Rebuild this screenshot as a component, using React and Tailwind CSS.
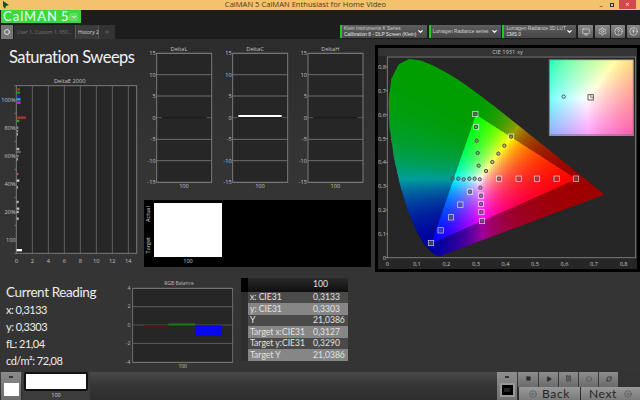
import React from "react";
import { Settings, CircleHelp, ArrowUpCircle, Monitor, ChevronDown, Play, Pause, Square, RefreshCw, CircleArrowLeft, CircleArrowRight, Circle, Plus } from "lucide-react";

const locus = [[.1741,.005],[.1733,.0048],[.1714,.0051],[.1689,.0069],[.1644,.0109],[.1566,.0177],[.144,.0297],[.1241,.0578],[.1096,.0868],[.0913,.1327],[.0687,.2007],[.0454,.295],[.0235,.4127],[.0082,.5384],[.0039,.6548],[.0139,.7502],[.0389,.812],[.0743,.8338],[.1142,.8262],[.1547,.8059],[.1929,.7816],[.2296,.7543],[.2658,.7243],[.3016,.6923],[.3373,.6589],[.3731,.6245],[.4087,.5896],[.4441,.5547],[.4788,.5202],[.5125,.4866],[.5448,.4544],[.5752,.4242],[.6029,.3965],[.627,.3725],[.6658,.334],[.6915,.3083],[.7079,.292],[.719,.2809],[.726,.274],[.7347,.2653]];
const PX = (x) => 37 + x * 886;
const PY = (y) => 638 - y * 715;
const locusPts = locus.map(([x, y]) => `${PX(x).toFixed(1)},${PY(y).toFixed(1)}`).join(" ");
const triPts = [[.64,.33],[.3,.6],[.15,.06]].map(([x, y]) => `${PX(x).toFixed(1)},${PY(y).toFixed(1)}`).join(" ");

function xyColor(x, y, dim, exp) {
  const Y = 1, X = (x / y) * Y, Z = ((1 - x - y) / y) * Y;
  let r = 3.2406 * X - 1.5372 * Y - 0.4986 * Z;
  let g = -0.9689 * X + 1.8758 * Y + 0.0415 * Z;
  let b = 0.0557 * X - 0.204 * Y + 1.057 * Z;
  r = Math.max(r, 0); g = Math.max(g, 0); b = Math.max(b, 0);
  const m = Math.max(r, g, b) || 1;
  const f = (v) => Math.round(255 * dim * Math.pow(v / m, exp));
  return `rgb(${f(r)},${f(g)},${f(b)})`;
}

const STEP = 6;
const cellsOuter = [];
const cellsInner = [];
for (let py = 42; py < 645; py += STEP) {
  for (let px = 37; px < 700; px += STEP) {
    const x = (px + 3 - 37) / 886, y = (638 - py - 3) / 715;
    if (y <= 0.002) continue;
    cellsOuter.push({ px, py, c: xyColor(x, y, 0.62, 1.5) });
    if (x > 0.13 && x < 0.66 && y > 0.04 && y < 0.62) cellsInner.push({ px, py, c: xyColor(x, y, 1, 1.15) });
  }
}
const inset = [];
for (let i = 0; i < 42; i++) {
  for (let j = 0; j < 38; j++) {
    const x = 0.25 + (i / 41) * 0.14, y = 0.41 - (j / 37) * 0.16;
    inset.push({ i, j, c: xyColor(x, y, 1, 0.55) });
  }
}

const dots = [[301,207],[303,246],[305,287],[308,324],[311,362],[314,403],[408,275],[388,302],[370,326],[352,351],[333,378],[233,401],[250,401],[266,403],[283,401],[299,401],[372,401],[431,401],[486,401],[537,401],[603,401],[168,594],[197,556],[228,517],[256,479],[285,440],[316,428],[318,452],[318,477],[319,501],[321,528]];
const squares = [[301,207],[315,403],[372,401],[431,401],[486,401],[545,401],[603,401],[168,594],[197,556],[228,517],[256,479],[285,440],[318,452],[318,477],[319,501],[321,528],[408,275],[303,246]];

const deltaBars = [[58,"#a33",10],[68,"#0a0",10],[78,"#22a",10],[88,"#0bd",12],[98,"#c2c",12],[143,"#a33",28],[153,"#2a2",8],[173,"#88a",5],[183,"#888",5],[193,"#aaa",4],[237,"#bbb",8],[246,"#667",12],[258,"#777",6],[268,"#aaa",4],[312,"#a55",5],[332,"#ccc",8],[352,"#aaa",4],[396,"#bbb",6],[416,"#bbb",8],[426,"#bbb",6],[446,"#bbb",6]];

function DeltaEChart() {
  const tickX = [49, 97, 145, 193, 241, 289, 337, 385];
  const labelsY = [[90,"100%"],[173,"80%"],[258,"60%"],[342,"40%"],[425,"20%"],[510,"100"]];
  const minor = [47,130,214,298,382,466,550];
  return (
    <svg className="block w-[140px] h-[200px]" viewBox="0 0 420 600">
      <text x="209" y="39" fontSize="17" fill="#c4c4c4" textAnchor="middle">DeltaE 2000</text>
      <rect x="49" y="47" width="361" height="503" fill="#262626" />
      {tickX.slice(1).map((x) => <line key={x} x1={x} x2={x} y1="47" y2="550" stroke="#6e6e6e" strokeWidth="2.5" />)}
      <rect x="49" y="47" width="361" height="503" fill="none" stroke="#7a7a7a" strokeWidth="3" />
      {minor.map((y) => <line key={y} x1="43" x2="49" y1={y} y2={y} stroke="#8a8a8a" strokeWidth="2" />)}
      {deltaBars.map(([y, c, w]) => <rect key={y} x="50" y={y - 3.5} width={w} height="7" fill={c} />)}
      <rect x="50" y="537" width="16" height="7" fill="#fff" />
      {labelsY.map(([y, t]) => <text key={t} x="47" y={y + 6} fontSize="17" fill="#c4c4c4" textAnchor="end">{t}</text>)}
      {tickX.map((x, i) => <text key={x} x={x} y="578" fontSize="17" fill="#c4c4c4" textAnchor="middle">{i * 2}</text>)}
    </svg>
  );
}

function DeltaPlot({ x0, title, bar }) {
  const ys = [[40,"15"],[104,"10"],[168,"5"],[233,"0"],[298,"-5"],[362,"-10"],[427,"-15"]];
  const w = 165;
  return (
    <g>
      <text x={x0 + 67} y="32" fontSize="17" fill="#c4c4c4" textAnchor="middle">{title}</text>
      <rect x={x0} y="40" width={w} height="387" fill="#262626" />
      {ys.map(([y, t]) => (
        <g key={t}>
          {t !== "0" && <line x1={x0} x2={x0 + w} y1={y} y2={y} stroke="#6e6e6e" strokeWidth="3" />}
          {t === "0" && <line x1={x0 - 2} x2={x0 + 16} y1={y} y2={y} stroke="#6e6e6e" strokeWidth="2" />}
          {t === "0" && <line x1={x0 + 16} x2={x0 + w - 16} y1={y} y2={y} stroke="#151515" strokeWidth="2" />}
          {t === "0" && <line x1={x0 + w - 16} x2={x0 + w} y1={y} y2={y} stroke="#6e6e6e" strokeWidth="2" />}
          <text x={x0 - 3} y={y + 6} fontSize="17" fill="#c4c4c4" textAnchor="end">{t}</text>
        </g>
      ))}
      <rect x={x0} y="40" width={w} height="387" fill="none" stroke="#7a7a7a" strokeWidth="3" />
      {bar && <rect x={x0 + 17} y="225" width="130" height="6" fill="#fff" />}
      <text x={x0 + 82} y="445" fontSize="17" fill="#c4c4c4" textAnchor="middle">100</text>
    </g>
  );
}

function DeltaCharts() {
  return (
    <svg className="block w-[235px] h-[155px]" viewBox="0 15 705 465">
      <DeltaPlot x0={50} title="DeltaL" />
      <DeltaPlot x0={278} title="DeltaC" bar />
      <DeltaPlot x0={504} title="DeltaH" />
    </svg>
  );
}

function CieChart() {
  return (
    <svg className="block w-[259px] h-[213px]" viewBox="9 33 777 639">
      <defs>
        <clipPath id="loc"><polygon points={locusPts} /></clipPath>
        <clipPath id="tri"><polygon points={triPts} /></clipPath>
      </defs>
      <rect x="9" y="33" width="777" height="639" fill="#262626" />
      <g clipPath="url(#loc)" shapeRendering="crispEdges">
        {cellsOuter.map((c) => <rect key={c.px + "_" + c.py} x={c.px} y={c.py} width={STEP + 0.5} height={STEP + 0.5} fill={c.c} />)}
      </g>
      <g clipPath="url(#tri)" shapeRendering="crispEdges">
        {cellsInner.map((c) => <rect key={c.px + "_" + c.py} x={c.px} y={c.py} width={STEP + 0.5} height={STEP + 0.5} fill={c.c} />)}
      </g>
      <rect x="37" y="36" width="745" height="602" fill="none" stroke="#7a7a7a" strokeWidth="3" />
      {[0,.1,.2,.3,.4,.5,.6,.7,.8].map((v, i) => (
        <g key={i}>
          <text x={PX(v)} y="664" fontSize="17" fill="#c4c4c4" textAnchor="middle">{i === 0 ? "0" : `0,${i}`}</text>
          <text x="33" y={PY(v) + 6} fontSize="17" fill="#c4c4c4" textAnchor="end">{i === 0 ? "0" : `0,${i}`}</text>
          <line x1="32" x2="38" y1={PY(v)} y2={PY(v)} stroke="#aaa" strokeWidth="2" />
        </g>
      ))}
      {dots.map(([x, y], i) => <circle key={i} cx={x} cy={y} r="5" fill="#777" fillOpacity="0.45" stroke="#4a4a4a" strokeWidth="3" />)}
      {squares.map(([x, y], i) => <rect key={i} x={x - 8} y={y - 8} width="16" height="16" fill="none" stroke="#eee" strokeOpacity="0.85" strokeWidth="2.2" />)}
      <g shapeRendering="crispEdges">
        {inset.map((c) => <rect key={c.i + "_" + c.j} x={523 + c.i * 6} y={44 + c.j * 6} width="6.5" height="6.5" fill={c.c} />)}
      </g>
      <rect x="523" y="44" width="252" height="226" fill="none" stroke="#777" strokeWidth="3" />
      <circle cx="566" cy="155" r="5" fill="none" stroke="#555" strokeWidth="3" />
      <rect x="639" y="149" width="16" height="16" fill="none" stroke="#444" strokeWidth="2.5" />
      <path d="M647 149v8h8" fill="none" stroke="#444" strokeWidth="2" />
    </svg>
  );
}

function RgbChart() {
  const ys = [[55,"4"],[110,"2"],[165,"0"],[220,"-2"],[277,"-4"]];
  return (
    <svg className="block w-[120px] h-[102px]" viewBox="360 0 360 306">
      <text x="537" y="46" fontSize="15" fill="#bdbdbd" textAnchor="middle">RGB Balance</text>
      <rect x="398" y="55" width="300" height="222" fill="#262626" />
      {ys.map(([y, t]) => (
        <g key={t}>
          <line x1="398" x2="698" y1={y} y2={y} stroke={t === "0" ? "#5a5a5a" : "#6e6e6e"} strokeWidth="2.5" />
          <text x="391" y={y + 5} fontSize="15" fill="#bdbdbd" textAnchor="end">{t}</text>
        </g>
      ))}
      <rect x="398" y="55" width="300" height="222" fill="none" stroke="#7a7a7a" strokeWidth="2.5" />
      <rect x="432" y="165" width="73" height="5" fill="#6a1010" />
      <rect x="505" y="160" width="80" height="5" fill="#0f7a0f" />
      <rect x="587" y="166" width="78" height="32" fill="#0808ee" />
      <text x="548" y="293" fontSize="15" fill="#c4c4c4" textAnchor="middle">100</text>
    </svg>
  );
}

const rows = [
  ["x: CIE31", "0,3133", "bg-[#4a4a4a]"],
  ["y: CIE31", "0,3303", "bg-[#868686]"],
  ["Y", "21,0386", "bg-[#4a4a4a]"],
  ["Target x:CIE31", "0,3127", "bg-[#868686]"],
  ["Target y:CIE31", "0,3290", "bg-[#4a4a4a]"],
  ["Target Y", "21,0386", "bg-[#868686]"],
];

function ReadingTable() {
  return (
    <div className="flex ml-[1px] mt-[8px] h-[83px] font-['Lato',sans-serif] text-[8.6px] leading-none text-[#e2e2e2]">
      <div className="w-[7px] flex flex-col bg-[#2e2e2e]">
        <div className="h-[13.5px] bg-black" />
      </div>
      <div className="w-[99.5px] flex flex-col">
        <div className="h-[13.5px] pl-[65px] flex items-center bg-gradient-to-b from-[#2a2a2a] to-[#0f0f0f]">100</div>
        {rows.map(([a, b, bg]) => (
          <div key={a} className={`flex-1 flex items-center pl-[2px] ${bg}`}>
            <span className="w-[63px] whitespace-nowrap">{a}</span>
            <span>{b}</span>
          </div>
        ))}
      </div>
    </div>
  );
}

function Selector({ w, a, b }) {
  return (
    <div className={`${w} h-[13px] flex items-center bg-gradient-to-b from-[#5e5e5e] to-[#474747] border-l-2 border-[#22c82a] pl-[2px] pr-[3px] font-['Liberation_Sans',sans-serif] text-[4.8px] leading-[6px] text-[#d0d0d0]`}>
      <div className="flex-1 min-w-0 whitespace-nowrap">
        <div>{a}</div>
        <div className="text-[#e6e6e6]">{b}</div>
      </div>
      <ChevronDown size={7} strokeWidth={4} className="text-white shrink-0" />
    </div>
  );
}

function SmallBtn({ w, children }) {
  return (
    <div className={`${w} h-[13px] flex items-center justify-center rounded-[1px] bg-gradient-to-b from-[#8a8a8a] to-[#5c5c5c] text-[#dddddd]`}>
      {children}
    </div>
  );
}

function TopBtn({ w, children }) {
  return (
    <div className={`${w} h-[15px] pb-[2px] flex items-center justify-center border-l border-[#3a3a3a] bg-gradient-to-b from-[#8e8e8e] to-[#6a6a6a] text-[#2c2c2c]`}>
      {children}
    </div>
  );
}

export default function App() {
  return (
    <div className="w-[640px] h-[400px] overflow-hidden flex flex-col bg-[#343434] font-['Open_Sans',sans-serif]">
      <div className="h-[10px] shrink-0 flex items-center bg-[#f2c26c] pl-[2px]">
        <svg width="8" height="8" viewBox="0 0 8 8" className="shrink-0"><path d="M1 0l6 4-3 1-1 3-2-3z" fill="#0d5a1c" /></svg>
        <div className="flex-1 text-center text-[7.6px] leading-none text-[#4a3a20] whitespace-nowrap pl-[4px]">CalMAN 5 CalMAN Enthusiast for Home Video</div>
        <div className="flex items-center h-full text-[#333]">
          <span className="w-[8px] text-[7px] leading-none text-center">–</span>
          <span className="w-[4px] h-[4px] border border-[#333] mx-[5px]" />
          <span className="w-[17px] h-[9px] mr-[4px] mb-[1px] bg-[#cf4a4a] text-white text-[7px] leading-[9px] text-center">×</span>
        </div>
      </div>

      <div className="h-[29px] shrink-0 flex justify-between bg-[#1d1d1d]">
        <div className="flex flex-col justify-between">
          <div className="ml-[1px] w-[80px] h-[13px] flex items-center pl-[2px] pr-[3px] bg-[#3ed83e] text-[13px] leading-none tracking-[1px] font-['Lato',sans-serif] text-[#e4ffff]">
            <span>CalMAN</span>
            <span className="ml-[3px] text-white">5</span>
            <span className="ml-auto w-[10px] h-[8px] rounded-[2px] bg-[#62dc62] flex items-center justify-center"><ChevronDown size={6} strokeWidth={4} className="text-white" /></span>
          </div>
          <div className="flex h-[14px] items-stretch text-[5px] leading-none whitespace-nowrap">
            <div className="w-[12px] ml-[1px] flex items-center justify-center bg-[#777]"><Circle size={6} strokeWidth={3} className="text-white" /></div>
            <div className="w-[61px] ml-[1px] flex items-center pl-[3px] bg-[#2f2f2f] text-[#777]">User 1, Custom 1, 650...</div>
            <div className="w-[24px] flex items-center pl-[2px] bg-[#3c3c3c] text-[#d8d8d8] border-x border-[#555]">History 2</div>
            <div className="w-[16px] flex items-center justify-center bg-[#333] text-[#777]"><Plus size={6} /></div>
          </div>
        </div>
        <div className="self-end flex items-center h-[13px] mb-[1px] gap-[1.67px]">
          <Selector w="w-[87px]" a="Klein Instruments K Series" b="Calibration 8 - DLP Screen (Klein)" />
          <Selector w="w-[72px]" a="Lumagen Radiance series" b="" />
          <Selector w="w-[74px]" a="Lumagen Radiance 3D LUT" b="CMS 0" />
          <SmallBtn w="w-[15px]"><Monitor size={8} /></SmallBtn>
          <SmallBtn w="w-[15px]"><Settings size={9} /></SmallBtn>
          <SmallBtn w="w-[14px]"><CircleHelp size={9} /></SmallBtn>
          <SmallBtn w="w-[13px]"><ArrowUpCircle size={9} /></SmallBtn>
        </div>
      </div>

      <div className="h-[231px] shrink-0 flex bg-gradient-to-b from-[#2c2c2c] via-[#343434] to-[#343434]">
        <div className="w-[140px] shrink-0 flex flex-col">
          <div className="h-[31px] pl-[9px] pt-[6px] font-['Lato',sans-serif] text-[16.5px] tracking-[-0.5px] leading-[24px] text-[#f2f2f2] whitespace-nowrap">Saturation Sweeps</div>
          <DeltaEChart />
        </div>
        <div className="w-[235px] shrink-0 flex flex-col pt-[6px]">
          <DeltaCharts />
          <div className="ml-[4px] w-[227px] h-[67px] flex bg-black text-[5.5px] leading-none text-[#d8d8d8]">
            <div className="w-[10px] pt-[6px] pb-[14px] flex flex-col justify-between items-center">
              <span className="[writing-mode:vertical-rl] rotate-180">Actual</span>
              <span className="[writing-mode:vertical-rl] rotate-180">Target</span>
            </div>
            <div className="flex flex-col pt-[3px]">
              <div className="w-[68px] h-[54px] bg-white" />
              <div className="text-center mt-[2px]">100</div>
            </div>
          </div>
        </div>
        <div className="w-[265px] shrink-0 mt-[6px] h-[227px] border-[3px] border-black bg-[#333] flex flex-col">
          <div className="h-[8px] text-center text-[5.8px] leading-[8px] text-[#c4c4c4]">CIE 1931 xy</div>
          <CieChart />
        </div>
      </div>

      <div className="h-[102px] shrink-0 flex">
        <div className="w-[120px] shrink-0 pl-[6px] pt-[12px] font-['Lato',sans-serif] text-[#ececec] text-[11px] tracking-[-0.5px] leading-[17px] whitespace-nowrap">
          <div className="text-[13.5px] tracking-[-0.4px] leading-[20px] mb-[-1px]">Current Reading</div>
          <div>x: 0,3133</div>
          <div>y: 0,3303</div>
          <div>fL: 21,04</div>
          <div>cd/m²: 72,08</div>
        </div>
        <RgbChart />
        <ReadingTable />
      </div>

      <div className="flex-1 flex bg-gradient-to-b from-[#4a4a4a] via-[#343434] to-[#2e2e2e]">
        <div className="w-[20px] ml-[1px] flex flex-col items-center bg-gradient-to-b from-[#8a8a8a] to-[#6e6e6e]">
          <div className="w-[4px] h-[2px] mt-[4px] bg-[#333]" />
          <div className="w-[15px] h-[13px] mt-[5px] bg-white" />
        </div>
        <div className="w-[68px] ml-[1px] flex flex-col items-center bg-[#3c3c3c]">
          <div className="w-[64px] h-[19px] bg-white rounded-[2px] border-2 border-[#111]" />
          <div className="text-[5.5px] leading-[9px] text-[#d8d8d8]">100</div>
        </div>
        <div className="ml-auto w-[143px] flex bg-[#2c2c2c]">
          <div className="w-[20px] flex flex-col items-center bg-gradient-to-b from-[#8e8e8e] to-[#707070]">
            <div className="w-[4px] h-[2px] mt-[4px] bg-[#333]" />
            <div className="w-[15px] h-[14px] mt-[5px] bg-black border-2 border-[#999] flex items-center justify-center"><div className="w-[6px] h-[4px] bg-[#222]" /></div>
          </div>
          <div className="flex-1 flex flex-col">
            <div className="flex">
              <TopBtn w="w-[21px]"><Square size={5} fill="currentColor" /></TopBtn>
              <TopBtn w="w-[20px]"><Play size={6} fill="currentColor" /></TopBtn>
              <TopBtn w="w-[20px]"><Pause size={7} /></TopBtn>
              <TopBtn w="w-[20px]"><Circle size={6} strokeWidth={3} className="text-[#555]" /></TopBtn>
              <TopBtn w="w-[20px]"><RefreshCw size={6} strokeWidth={3} /></TopBtn>
              <div className="flex-1 h-[15px] bg-[#333]" />
            </div>
            <div className="flex h-[13px] text-[12px] leading-none text-[#262626] font-['Lato',sans-serif]">
              <div className="w-[61px] ml-[2px] flex items-center justify-center gap-[5px] bg-gradient-to-b from-[#9a9a9a] to-[#7a7a7a]"><CircleArrowLeft size={8} className="text-[#555]" /><span className="tracking-[0.6px]">Back</span></div>
              <div className="flex-1 ml-[1px] flex items-center justify-center gap-[7px] bg-gradient-to-b from-[#9a9a9a] to-[#7a7a7a]"><span className="tracking-[0.6px]">Next</span><CircleArrowRight size={8} className="text-[#555]" /></div>
            </div>
          </div>
        </div>
      </div>
    </div>
  );
}
